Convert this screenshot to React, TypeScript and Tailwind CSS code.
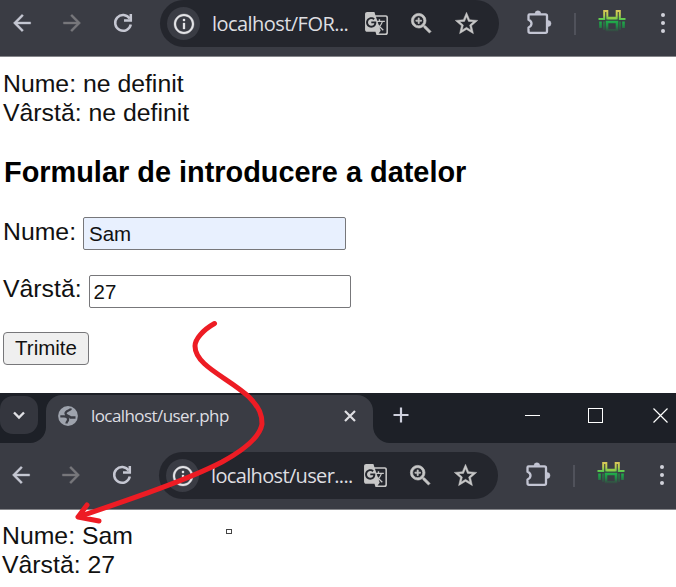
import type { ReactNode } from 'react';
import type { IconType } from 'react-icons';
import {
  MdArrowBack,
  MdArrowForward,
  MdGTranslate,
  MdOutlineInfo,
  MdStarBorder,
  MdZoomIn,
} from 'react-icons/md';

function Reload() {
  return (
    <svg className="block h-6 w-6" viewBox="0 0 24 24" fill="none" stroke="#c5c7d2" strokeWidth="2.5">
      <path d="M18.700 7.600A7.900 7.900 0 1 0 19.800 13.600" />
      <path d="M19.800 3V9.400H13" />
    </svg>
  );
}

function Globe() {
  return (
    <svg className="block h-6 w-6 shrink-0" viewBox="0 0 24 24">
      <circle cx="12" cy="12" r="9.900" fill="#9ea3ad" />
      <path
        d="M14.500 4.500C15.500 6.500 14 8 12 8C10.500 8 10.500 10 12 10.500C14 11 15 12 15.500 13.500H19.800A8 8 0 0 1 11 19.800V17.500H13V15C13 13.500 10.500 14 9.500 12.500H4.200C4 8 8 4 14.500 4.500Z"
        fill="none"
      />
      <path
        d="M15 4.500C14.500 7 9.500 6 9.500 9.500C9.500 12 13.500 11.500 14.500 13.500H19.500M4.300 12.300H8C11 12.300 12.500 14 12 16C11.700 17.500 10.500 17.500 10.500 19.500"
        fill="none"
        stroke="#3a3c44"
        strokeWidth="2.300"
      />
    </svg>
  );
}

function Puzzle() {
  return (
    <svg className="block h-7 w-7" viewBox="0 0 28 28" fill="none" stroke="#c3c5d3" strokeWidth="2.3" strokeLinejoin="round">
      <path d="M4.500 6.400H20.500a1.500 1.500 0 0 1 1.500 1.500V23.300a1.500 1.500 0 0 1-1.500 1.500H5a1.500 1.500 0 0 1-1.500-1.500V19.500c4-1.600 4-6.200 0-7.800V7.400a1 1 0 0 1 1-1Z" />
      <path d="M10 5.700a2.900 2.900 0 0 1 5.800 0ZM23 12.500a3 3 0 0 1 0 6Z" fill="#c3c5d3" stroke="#c3c5d3" strokeWidth=".5" />
    </svg>
  );
}

function Extension({ id }: { id: string }) {
  return (
    <svg className="block h-7 w-7" viewBox="0 0 28 28">
      <defs>
        <linearGradient id={`${id}-top`} x1="0" y1="2" x2="0" y2="14" gradientUnits="userSpaceOnUse">
          <stop stopColor="#e2c45c" />
          <stop offset=".5" stopColor="#b9d04c" />
          <stop offset="1" stopColor="#35c751" />
        </linearGradient>
        <linearGradient id={`${id}-low`} x1="0" y1="13" x2="0" y2="25" gradientUnits="userSpaceOnUse">
          <stop stopColor="#21b64d" />
          <stop offset=".5" stopColor="#1f8d45" />
          <stop offset="1" stopColor="#3a3b43" />
        </linearGradient>
      </defs>
      <path d="M.5 12H6.200V4H9.300V11.500H18.700V4H21.800V12H27.500" fill="none" stroke={`url(#${id}-top)`} strokeWidth="2" />
      <path d="M9.500 11H18.500" stroke="#8ecb48" strokeWidth="2.500" />
      <path d="M9 15H19V23.500H9ZM2.500 14.500V21M25.500 14.500V21" fill="none" stroke={`url(#${id}-low)`} strokeWidth="2.600" />
      <path d="M6 14.500V23M22 14.500V23" stroke={`url(#${id}-low)`} strokeWidth="1" />
    </svg>
  );
}

function Slot({ className, children }: { className: string; children: ReactNode }) {
  return <div className={`flex shrink-0 items-center justify-center ${className}`}>{children}</div>;
}

function Glyph({ icon: Icon, size, color, weight }: { icon: IconType; size: number; color: string; weight: number }) {
  return <Icon size={size} color={color} strokeWidth={weight} className="[&_path[fill=none]]:stroke-none" />;
}

function Toolbar({ id, url, className }: { id: string; url: ReactNode; className: string }) {
  return (
    <div className={`flex shrink-0 items-start overflow-hidden border-b border-[#85868a] bg-[#3a3c44] ${className}`}>
      <div className="flex h-[47px] shrink-0 items-center">
        <Slot className="w-[44px] pb-px"><Glyph icon={MdArrowBack} size={26} color="#c5c7d2" weight={0.3} /></Slot>
        <Slot className="ml-[6px] w-[44px] pb-px"><Glyph icon={MdArrowForward} size={26} color="#77777b" weight={0.3} /></Slot>
        <Slot className="ml-[7px] w-[44px] pb-px"><Reload /></Slot>
        <div className="ml-[15px] flex h-[47px] w-[339px] items-center rounded-full bg-[#24262d] pl-[7px]">
          <Slot className="h-[33px] w-[33px] rounded-full bg-[#3a3c44]"><Glyph icon={MdOutlineInfo} size={24} color="#e3e3e6" weight={0.3} /></Slot>
          <div className="ml-[12px] w-[152px] whitespace-nowrap font-['Open_Sans',sans-serif] text-[20px] leading-[47px] text-[#dedee1]">{url}</div>
          <Slot className="w-[25px]"><Glyph icon={MdGTranslate} size={25} color="#c7c7c7" weight={0} /></Slot>
          <Slot className="ml-[19px] w-[27px]"><Glyph icon={MdZoomIn} size={27} color="#c7c7c7" weight={0.6} /></Slot>
          <Slot className="ml-[18px] w-[27px]"><Glyph icon={MdStarBorder} size={27} color="#c7c7c7" weight={0.4} /></Slot>
        </div>
        <Slot className="ml-[26px] w-7 pb-1"><Puzzle /></Slot>
        <div className="ml-[21px] h-[22px] w-[2px] bg-[#50525b]" />
        <Slot className="ml-[22px] w-7 pb-[6px]"><Extension id={id} /></Slot>
        <div className="ml-[35px] flex flex-col gap-1 pb-px text-[#d0d1da]">
          <div className="h-1 w-1 rounded-full bg-current" />
          <div className="h-1 w-1 rounded-full bg-current" />
          <div className="h-1 w-1 rounded-full bg-current" />
        </div>
      </div>
    </div>
  );
}

function TabStrip() {
  return (
    <div className="flex h-[50px] shrink-0 bg-[#1d2027]">
      <div className="flex w-[46px] bg-[#3a3c44]">
        <div className="w-full rounded-br-[16px] bg-[#1d2027] pt-[3px]">
          <div className="flex h-[38px] w-[38px] items-center justify-center rounded-[13px] bg-[#34363e]">
            <svg className="h-3 w-3" viewBox="0 0 12 12" fill="none" stroke="#e0e0e4" strokeWidth="2.4"><path d="m1 3.500 5 5 5-5" /></svg>
          </div>
        </div>
      </div>
      <div className="flex w-[327px] bg-[#1d2027] pt-[2px]">
        <div className="flex h-12 w-full items-center rounded-t-[16px] bg-[#3a3c44] pb-[6px] pl-[10px]">
          <Globe />
          <span className="ml-[11px] w-[253px] font-['Open_Sans',sans-serif] text-[17px] tracking-[-0.58px] text-[#dedee2]">localhost/user.php</span>
          <svg className="h-3 w-3 shrink-0" viewBox="0 0 12 12" stroke="#dedee2" strokeWidth="2.200"><path d="m1 1 10 10M11 1 1 11" /></svg>
        </div>
      </div>
      <div className="flex flex-1 bg-[#3a3c44]">
        <div className="flex flex-1 items-center rounded-bl-[17px] bg-[#1d2027] pb-[6px] pl-5">
          <svg className="h-4 w-4" viewBox="0 0 16 16" stroke="#ced0dc" strokeWidth="2.200"><path d="M8 .5v15M.5 8h15" /></svg>
          <div className="ml-[116px] mt-px h-px w-[15px] bg-white" />
          <div className="ml-[48px] mt-px h-[15px] w-[15px] border border-white" />
          <svg className="ml-[50px] h-4 w-4 shrink-0" viewBox="0 0 16 16" stroke="#fff" strokeWidth="1.200"><path d="m.5 1.500 14 14M14.500 1.500.500 15.500" /></svg>
        </div>
      </div>
    </div>
  );
}

export default function App() {
  return (
    <div className="relative flex h-[587px] w-[676px] flex-col overflow-hidden bg-white font-['Liberation_Sans',Arial,sans-serif] text-[#111]">
      <Toolbar id="a" className="h-[57px]" url={<span className="tracking-[-0.55px]">localhost/FOR...</span>} />
      <main className="flex h-[336px] shrink-0 flex-col items-start pl-[3px] pt-[12px]">
        <p className="text-[24.800px] leading-[29px]">Nume: ne definit<br />Vârstă: ne definit</p>
        <h3 className="mt-[28px] pl-px text-[28.900px] font-bold leading-[34px] text-black">Formular de introducere a datelor</h3>
        <label className="mt-[28px] flex items-start text-[24.800px] leading-[29px]">
          Nume:
          <input className="ml-[7px] h-[33px] w-[263px] rounded-[2px] border border-[#77777a] bg-[#e8f0fe] px-[5px] text-[20.500px]" defaultValue="Sam" />
        </label>
        <label className="mt-[24px] flex items-start text-[24.800px] leading-[29px]">
          Vârstă:
          <input className="ml-[7px] mt-px h-[33px] w-[262px] rounded-[2px] border border-[#77777a] bg-white px-[4px] text-[20.500px]" defaultValue="27" />
        </label>
        <button className="mt-[24px] h-[33px] w-[86px] rounded-[4px] border border-[#77777a] bg-[#efefef] pb-px text-[20.500px] leading-none">Trimite</button>
      </main>
      <TabStrip />
      <div className="flex h-[67px] shrink-0 flex-col bg-[#3a3c44] pt-[9px]">
        <Toolbar id="b" className="-ml-px h-[58px]" url={<span className="tracking-[-0.65px]">localhost/user....</span>} />
      </div>
      <p className="pl-[2px] pt-[11px] text-[24.800px] leading-[29px]">Nume: Sam<br />Vârstă: 27</p>
      <div className="absolute left-[226px] top-[529px] h-[5px] w-[6px] border border-[#444]" />
      <svg className="pointer-events-none absolute left-0 top-0" width="676" height="587" fill="none" stroke="#ed1c24" strokeWidth="5" strokeLinecap="round" strokeLinejoin="round">
        <path d="M214.500 323.500C203 330 195 339 195 346C195 366 229 378 249 397C260 408 262 415 262 424C260 437 242 451 222 462C187 480 134 498 78 517M87 505 78 517 99 521" />
      </svg>
    </div>
  );
}
